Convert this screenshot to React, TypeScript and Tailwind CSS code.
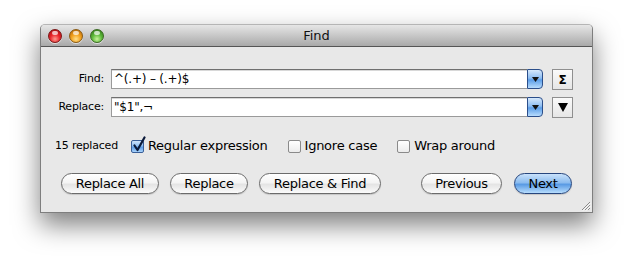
import React from 'react';

const font = { fontFamily: '"Lucida Grande", "DejaVu Sans", sans-serif' };

const TrafficLight = ({ color }: { color: 'red' | 'orange' | 'green' }) => {
  const fills = {
    red: 'bg-[radial-gradient(circle_at_50%_75%,#ff9a8f_0%,#e8232a_45%,#9e0c10_100%)] border-[#7a1515]',
    orange: 'bg-[radial-gradient(circle_at_50%_75%,#ffe08a_0%,#f2a01c_45%,#a85c08_100%)] border-[#8a5a12]',
    green: 'bg-[radial-gradient(circle_at_50%_75%,#c8f59a_0%,#5cb83a_45%,#2d6e13_100%)] border-[#3b6b22]',
  };
  return (
    <div className={`relative w-[14px] h-[14px] rounded-full border ${fills[color]} shadow-[0_1px_0_rgba(255,255,255,0.6)]`}>
      <div className="absolute left-[3px] top-[1px] w-[6px] h-[4px] rounded-full bg-white/70" />
    </div>
  );
};

const ComboField = ({ value }: { value: string }) => (
  <div className="flex h-[20px] w-[432px]">
    <div className="flex-1 flex items-center bg-white border border-[#9a9a9a] border-t-[#6f6f6f] border-r-0 pl-[2px] text-[12px] tracking-[-0.2px] text-black shadow-[inset_0_1px_0_#d8d8d8]">
      {value}
    </div>
    <div className="w-[16px] h-[20px] flex items-center justify-center rounded-r-[4px] border border-[#2b4e8a] bg-[linear-gradient(#d6e8fb_0%,#8dbdf2_45%,#5b9de8_55%,#b8dcfd_100%)]">
      <svg width="7" height="5" viewBox="0 0 7 5">
        <path d="M0 0 L7 0 L3.5 5 Z" fill="#111" />
      </svg>
    </div>
  </div>
);

const SquareButton = ({ children }: { children: React.ReactNode }) => (
  <div className="w-[21px] h-[21px] flex items-center justify-center border border-[#8f8f8f] bg-[linear-gradient(#fafafa,#e6e6e6)] text-[12px] font-semibold text-black">
    {children}
  </div>
);

const Checkbox = ({ checked, label }: { checked?: boolean; label: string }) => (
  <div className="flex items-center gap-[4px]">
    <div
      className={`relative w-[13px] h-[13px] rounded-[2px] border ${
        checked
          ? 'border-[#3a5f98] bg-[linear-gradient(#cfe4fb_0%,#8fbff3_45%,#5d9ce6_55%,#a9d3fb_100%)]'
          : 'border-[#8a8a8a] bg-[linear-gradient(#ffffff,#ececec)]'
      }`}
    >
      {checked && (
        <svg className="absolute left-[1px] top-[-5px]" width="13" height="16" viewBox="0 0 13 16">
          <path d="M1.5 9.5 L4.5 14 L11.5 1.5" stroke="#0b1a3a" strokeWidth="2.2" fill="none" strokeLinecap="round" strokeLinejoin="round" />
        </svg>
      )}
    </div>
    <span className="text-[13px] leading-[16px] tracking-[-0.25px] text-black">{label}</span>
  </div>
);

const PushButton = ({ label, width, primary }: { label: string; width: string; primary?: boolean }) => (
  <div
    className={`${width} h-[21px] flex items-center justify-center rounded-full border text-[13px] tracking-[-0.3px] text-black shadow-[0_1px_1px_rgba(0,0,0,0.15)] ${
      primary
        ? 'border-[#27467e] bg-[linear-gradient(#c9e2fb_0%,#8cbcef_45%,#5a9be4_55%,#b7ddfd_100%)]'
        : 'border-[#6b6b6b] bg-[linear-gradient(#ffffff_0%,#f4f4f4_45%,#e4e4e4_55%,#fbfbfb_100%)]'
    }`}
  >
    {label}
  </div>
);

export default function App() {
  return (
    <div className="w-[632px] h-[268px] bg-white overflow-hidden pt-[24px] pl-[40px]" style={font}>
      <div className="relative w-[553px] h-[189px] flex flex-col border border-[#7e7e7e] border-t-[#b5b5b5] rounded-t-[5px] bg-[#e8e8e8] shadow-[0_12px_26px_rgba(0,0,0,0.5)]">
        {/* title bar */}
        <div className="relative h-[22px] flex items-center pl-[7px] gap-[7px] rounded-t-[4px] border-b border-[#555555] bg-[linear-gradient(#e6e6e6,#a9a9a9)]">
          <TrafficLight color="red" />
          <TrafficLight color="orange" />
          <TrafficLight color="green" />
          <div className="absolute inset-0 flex items-center justify-center text-[13px] text-[#111]">Find</div>
        </div>

        {/* body */}
        <div className="flex flex-col pt-[22px]">
          <div className="flex items-start h-[20px]">
            <div className="w-[63px] h-[20px] flex items-center justify-end text-[11px] tracking-[-0.2px] text-black">Find:</div>
            <div className="ml-[7px]">
              <ComboField value="^(.+) – (.+)$" />
            </div>
            <div className="ml-[9px]">
              <SquareButton>Σ</SquareButton>
            </div>
          </div>

          <div className="flex items-start h-[20px] mt-[8px]">
            <div className="w-[63px] h-[20px] flex items-center justify-end text-[11px] tracking-[-0.2px] text-black">Replace:</div>
            <div className="ml-[7px]">
              <ComboField value={'"$1",¬'} />
            </div>
            <div className="ml-[9px]">
              <SquareButton>
                <svg width="10" height="9" viewBox="0 0 10 9">
                  <path d="M0 0 L10 0 L5 9 Z" fill="#000" />
                </svg>
              </SquareButton>
            </div>
          </div>

          <div className="flex items-center h-[16px] mt-[21px] pl-[14px]">
            <span className="text-[11px] tracking-[-0.2px] text-black mr-[13px]">15 replaced</span>
            <Checkbox checked label="Regular expression" />
            <div className="ml-[20px]">
              <Checkbox label="Ignore case" />
            </div>
            <div className="ml-[20px]">
              <Checkbox label="Wrap around" />
            </div>
          </div>

          <div className="flex items-center h-[21px] mt-[19px] pl-[20px] pr-[20px]">
            <div className="flex gap-[11px]">
              <PushButton label="Replace All" width="w-[98px]" />
              <PushButton label="Replace" width="w-[78px]" />
              <PushButton label="Replace & Find" width="w-[122px]" />
            </div>
            <div className="flex gap-[12px] ml-auto">
              <PushButton label="Previous" width="w-[81px]" />
              <PushButton label="Next" width="w-[58px]" primary />
            </div>
          </div>
        </div>

        {/* resize grip */}
        <svg className="absolute right-[1px] bottom-[1px]" width="11" height="11" viewBox="0 0 11 11">
          <path d="M10 2 L2 10 M10 5 L5 10 M10 8 L8 10" stroke="#8a8a8a" strokeWidth="1" />
          <path d="M10.8 2.8 L2.8 10.8 M10.8 5.8 L5.8 10.8" stroke="#ffffff" strokeWidth="0.8" />
        </svg>
      </div>
    </div>
  );
}
